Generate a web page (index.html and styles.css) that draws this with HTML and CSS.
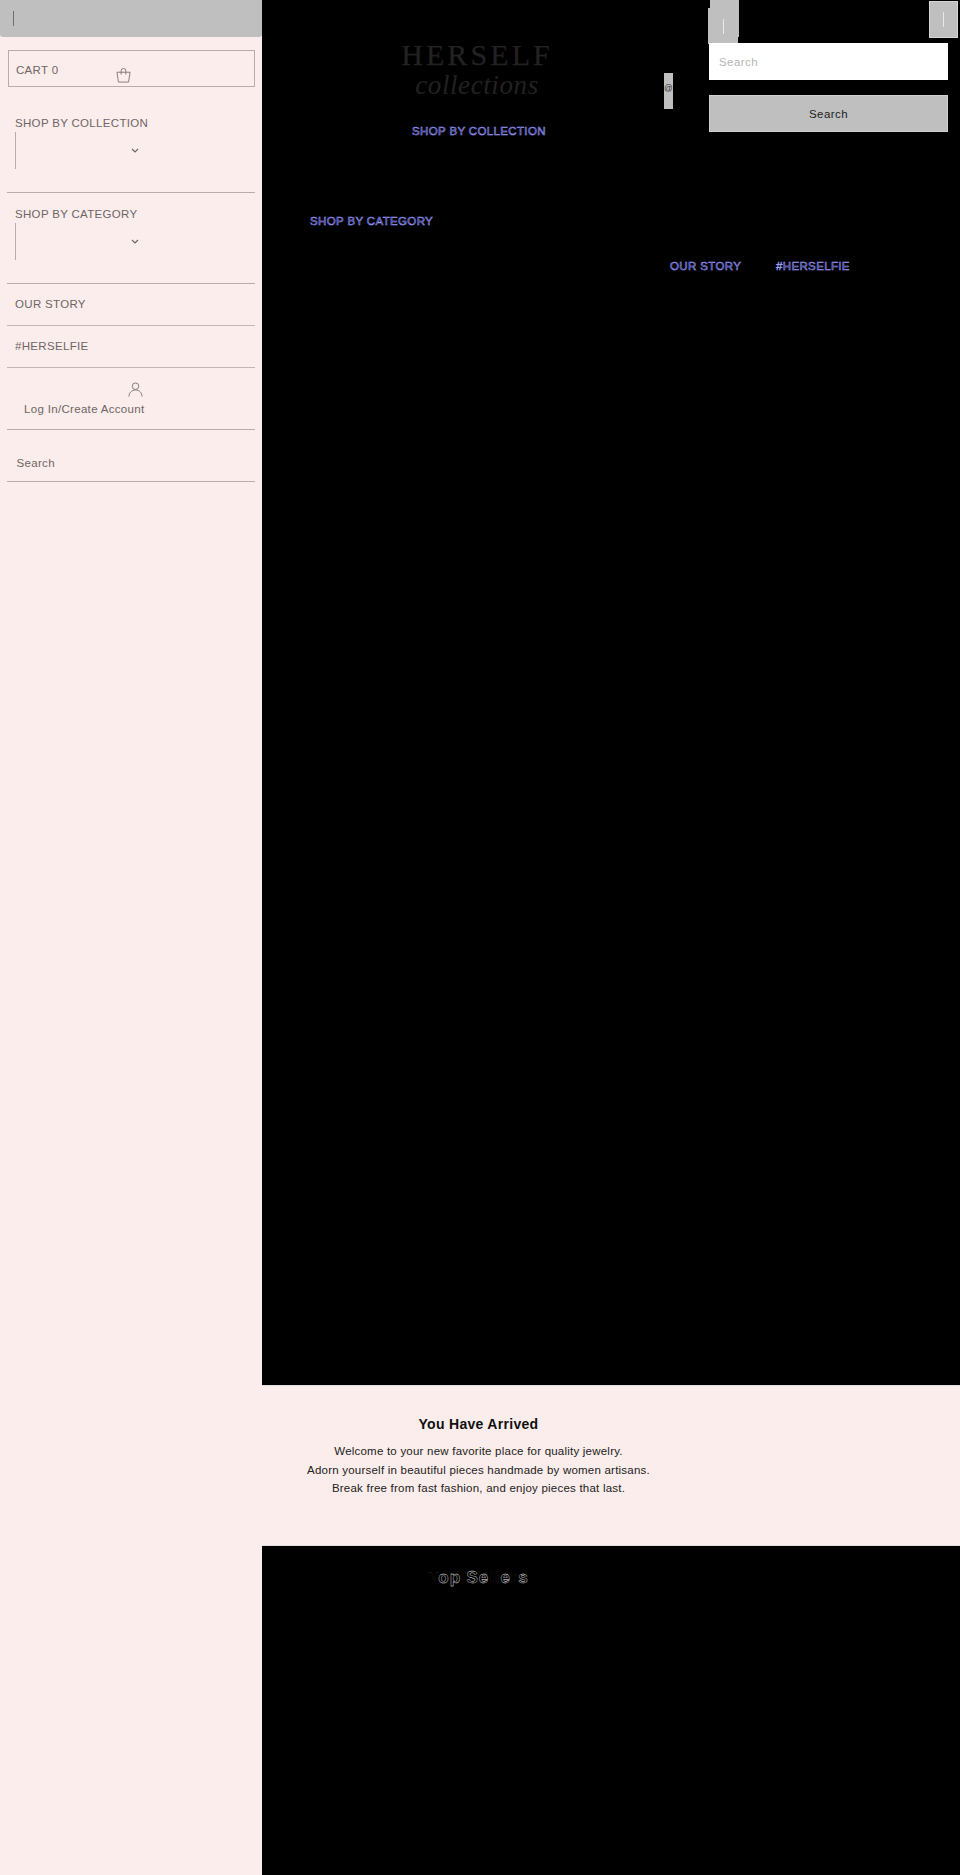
FILE: index.html
```html
<!DOCTYPE html>
<html lang="en">
<head>
<meta charset="utf-8">
<title>Herself Collections</title>
<link rel="stylesheet" href="styles.css">
</head>
<body>
<div class="page">
  <aside class="sidebar">
    <div class="topbar"><span class="caret"></span></div>
    <a class="cart">
      <span class="cart-label">CART 0</span>
      <svg class="bag" viewBox="0 0 16 16" width="15" height="15" fill="none" stroke="#7c7272" stroke-width="0.95"><path d="M1 4.5h14l-1.6 10.5H2.6z"/><path d="M5.5 7V3a2.5 2.5 0 0 1 5 0v4"/></svg>
    </a>
    <div class="group">
      <div class="label">SHOP BY COLLECTION</div>
      <div class="select">
        <svg class="chev" viewBox="0 0 8 6" width="8" height="6" fill="none" stroke="#6f6565" stroke-width="1.2"><path d="M1 1l3 3 3-3"/></svg>
      </div>
    </div>
    <div class="group">
      <div class="label">SHOP BY CATEGORY</div>
      <div class="select">
        <svg class="chev" viewBox="0 0 8 6" width="8" height="6" fill="none" stroke="#6f6565" stroke-width="1.2"><path d="M1 1l3 3 3-3"/></svg>
      </div>
    </div>
    <div class="row">OUR STORY</div>
    <div class="row">#HERSELFIE</div>
    <div class="account">
      <svg class="user" viewBox="0 0 16 16" width="15" height="15" fill="none" stroke="#7c7272" stroke-width="0.95"><circle cx="8" cy="4.5" r="3.5"/><path d="M1 15.5c0-4 3-7 7-7s7 3 7 7"/></svg>
      <div class="login">Log In/Create Account</div>
    </div>
    <div class="side-search">Search</div>
  </aside>
  <main class="main">
    <section class="hero">
      <div class="logo">
        <div class="logo-top">HERSELF</div>
        <div class="logo-sub">collections</div>
      </div>
      <a class="nav nav-collection">SHOP BY COLLECTION</a>
      <a class="nav nav-category">SHOP BY CATEGORY</a>
      <a class="nav nav-story">OUR STORY</a>
      <a class="nav nav-selfie">#HERSELFIE</a>
      <div class="sliver"><span class="sliver-glyph">@</span></div>
      <div class="gray-btn btn-a"></div>
      <div class="gray-btn btn-b"><span class="tick"></span></div>
      <div class="gray-btn btn-c"><span class="tick"></span></div>
      <div class="search-form">
        <div class="search-input">Search</div>
        <div class="search-btn">Search</div>
      </div>
    </section>
    <section class="welcome">
      <h2 class="welcome-title">You Have Arrived</h2>
      <p class="welcome-text">Welcome to your new favorite place for quality jewelry.<br>Adorn yourself in beautiful pieces handmade by women artisans.<br>Break free from fast fashion, and enjoy pieces that last.</p>
    </section>
    <section class="sellers">
      <h2 class="sellers-title"><span class="faint">T</span>op Se<span class="faint">ll</span>e<span class="faint">r</span>s</h2>
    </section>
  </main>
</div>
</body>
</html>
```
FILE: styles.css
```css
* { box-sizing: border-box; }
html, body { margin: 0; padding: 0; background: #000; }
body { font-family: "Liberation Sans", Arial, sans-serif; }
.page { display: flex; width: 960px; height: 1875px; overflow: hidden; }

.sidebar { width: 262px; flex: none; background: #fbedeb; color: #6f6565; font-size: 11.5px; letter-spacing: 0.32px; display: flex; flex-direction: column; align-items: stretch; }
.topbar { height: 37px; background: #bfbfbf; border-radius: 0 0 3px 3px; display: flex; align-items: center; padding-left: 13px; }
.caret { width: 1px; height: 15px; background: #6f6f6f; }
.cart { margin: 13px 7px 0 8px; height: 37px; border: 1px solid #bca9a9; position: relative; padding: 7px 0 0 7px; line-height: 24px; }
.bag { position: absolute; left: 107px; top: 17px; }
.group { margin: 0 7px; border-bottom: 1px solid #bca9a9; padding: 27px 0 0 8px; height: 106px; }
.group + .group { height: 91px; padding-top: 12px; }
.label { line-height: 18px; height: 18px; }
.select { width: 1px; height: 37px; background: #bca9a9; position: relative; }
.chev { position: absolute; left: 116px; top: 16px; }
.row { margin: 0 7px; height: 42px; border-bottom: 1px solid #c4b4b4; padding-left: 8px; line-height: 41px; }
.account { margin: 0 7px; height: 62px; border-bottom: 1px solid #bca9a9; position: relative; padding: 32px 0 0 17px; line-height: 18px; }
.user { position: absolute; left: 120.5px; top: 14px; }
.side-search { margin: 0 7px; height: 52px; border-bottom: 1px solid #bca9a9; padding: 23px 0 0 9.5px; line-height: 20px; }

.main { flex: 1; display: flex; flex-direction: column; }
.hero { height: 1385px; flex: none; background: #000; position: relative; }
.logo { position: absolute; left: 107px; top: 38px; width: 216px; text-align: center; font-family: "Liberation Serif", serif; color: #232121; }
.logo-top { font-size: 30px; letter-spacing: 3.1px; line-height: 34px; -webkit-text-stroke: 0.25px #232121; }
.logo-sub { font-size: 27px; font-style: italic; letter-spacing: 0.6px; line-height: 26px; }
.nav { position: absolute; font-size: 11.5px; letter-spacing: 0.36px; line-height: 16px; color: #14143c; -webkit-text-stroke: 0.55px #9c9cff; white-space: nowrap; }
.nav-collection { left: 150px; top: 123px; }
.nav-category { left: 48px; top: 213px; }
.nav-story { left: 408px; top: 258px; }
.nav-selfie { left: 514px; top: 258px; }
.sliver { position: absolute; left: 402px; top: 73px; width: 9px; height: 36px; background: #bfbfbf; font-size: 8.5px; color: #333; line-height: 30px; letter-spacing: 0; }
.gray-btn { position: absolute; background: #bfbfbf; }
.btn-a { left: 448px; top: 0; width: 29px; height: 37px; }
.btn-b { left: 446px; top: 8px; width: 30px; height: 36px; display: flex; align-items: center; justify-content: center; }
.btn-c { left: 667px; top: 1px; width: 29px; height: 37px; border: 1px solid #d4d4d4; display: flex; align-items: center; justify-content: center; }
.tick { width: 1px; height: 15px; background: #e8e8e8; }
.search-form { position: absolute; left: 447px; top: 43px; width: 239px; display: flex; flex-direction: column; gap: 15px; font-size: 11.5px; letter-spacing: 0.42px; }
.search-input { height: 37px; background: #fff; color: #b5b5b5; line-height: 38px; padding-left: 10px; }
.search-btn { height: 37px; background: #bfbfbf; border: 1px solid #cfcfcf; color: #1c1c1c; line-height: 37px; text-align: center; }

.welcome { height: 161px; flex: none; background: #fbedeb; border-top: 1px solid #ddd; border-bottom: 1px solid #ddd; text-align: center; padding: 28px 265px 0 0; color: #222; }
.welcome-title { margin: 0 0 8px; font-size: 14px; line-height: 20px; letter-spacing: 0.3px; color: #111; font-weight: bold; white-space: nowrap; }
.welcome-text { margin: 0; font-size: 11.5px; letter-spacing: 0.22px; line-height: 18.7px; white-space: nowrap; }
.sellers { flex: 1; background: #000; text-align: center; padding: 22px 265px 0 0; }
.sellers-title { margin: 0; font-size: 17px; line-height: 20px; letter-spacing: 0.9px; font-weight: bold; color: #000; -webkit-text-stroke: 0.35px #f0f0f0; white-space: nowrap; }
.faint { -webkit-text-stroke: 0.15px #4a4a4a; }
```
